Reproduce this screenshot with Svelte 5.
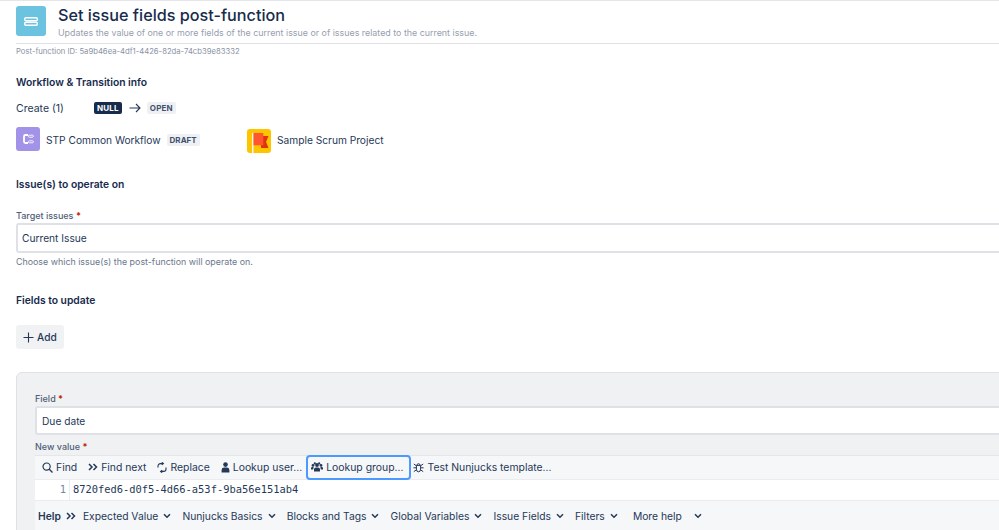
<script>
  const toolbarHelp = [
    { label: "Expected Value" },
    { label: "Nunjucks Basics" },
    { label: "Blocks and Tags" },
    { label: "Global Variables" },
    { label: "Issue Fields" },
    { label: "Filters" },
  ];
</script>

<div class="page">
  <header class="head">
    <div class="head-icon">
      <svg width="14" height="9" viewBox="0 0 14 9">
        <rect x="0.7" y="0.7" width="12.6" height="3" rx="1.2" fill="none" stroke="#fff" stroke-width="1.4" />
        <rect x="0.7" y="5.3" width="12.6" height="3" rx="1.2" fill="none" stroke="#fff" stroke-width="1.4" />
      </svg>
    </div>
    <div class="head-text">
      <h1>Set issue fields post-function</h1>
      <p>Updates the value of one or more fields of the current issue or of issues related to the current issue.</p>
    </div>
  </header>
  <div class="pf-id">Post-function ID: 5a9b46ea-4df1-4426-82da-74cb39e83332</div>

  <h2 class="first">Workflow &amp; Transition info</h2>
  <div class="transition">
    <span class="create">Create (1)</span>
    <span class="lozenge dark">NULL</span>
    <svg class="arrow" width="12" height="10" viewBox="0 0 12 10">
      <path d="M0.5 5H11M7 1l4 4-4 4" fill="none" stroke="#253858" stroke-width="1.1" />
    </svg>
    <span class="lozenge">OPEN</span>
  </div>

  <div class="context">
    <div class="workflow">
      <div class="ctx-icon purple">
        <svg width="11" height="10" viewBox="0 0 11 10">
          <path d="M5 1H2.4A1.4 1.4 0 0 0 1 2.4v5.2A1.4 1.4 0 0 0 2.4 9H5" fill="none" stroke="#fff" stroke-width="1.8" />
          <rect x="5.4" y="1.2" width="5" height="2" rx="1" fill="none" stroke="#fff" stroke-width="0.9" />
          <rect x="5.4" y="6.8" width="5" height="2" rx="1" fill="none" stroke="#fff" stroke-width="0.9" />
        </svg>
      </div>
      <span class="ctx-name">STP Common Workflow</span>
      <span class="lozenge draft">DRAFT</span>
    </div>
    <div class="project">
      <div class="ctx-icon yellow">
        <svg width="24" height="24" viewBox="0 0 24 24">
          <rect x="5" y="4" width="1.5" height="20" fill="#f4f5f7" />
          <path d="M14 7h7.5l-2.4 6 2.4 6H14z" fill="#de350b" />
          <path d="M6.5 4H16.3V16.3H6.5z" fill="#ff5630" />
        </svg>
      </div>
      <span class="ctx-name">Sample Scrum Project</span>
    </div>
  </div>

  <h2 class="issues">Issue(s) to operate on</h2>
  <label class="lbl target">Target issues <b>*</b></label>
  <div class="input">Current Issue</div>
  <div class="help">Choose which issue(s) the post-function will operate on.</div>

  <h2 class="fields">Fields to update</h2>
  <button class="add">
    <svg width="11" height="11" viewBox="0 0 11 11"><path d="M5.5 0.5v10M0.5 5.5h10" stroke="#253858" stroke-width="1.1" /></svg>
    Add
  </button>

  <section class="panel">
    <label class="lbl">Field <b>*</b></label>
    <div class="input small">Due date</div>
    <label class="lbl value">New value <b>*</b></label>
    <div class="editor">
      <div class="toolbar">
        <span class="tool">
          <svg width="11" height="11" viewBox="0 0 11 11"><circle cx="4.6" cy="4.6" r="3.6" fill="none" stroke="#253858" stroke-width="1.2" /><path d="M7.3 7.3l3.2 3.2" stroke="#253858" stroke-width="1.3" /></svg>
          Find
        </span>
        <span class="tool">
          <svg width="10" height="8" viewBox="0 0 10 8"><path d="M1 1l3 3-3 3M5.5 1l3 3-3 3" fill="none" stroke="#253858" stroke-width="1.5" /></svg>
          Find next
        </span>
        <span class="tool">
          <svg width="10" height="11" viewBox="0 0 10 11"><path d="M1 5.5V4a2.4 2.4 0 0 1 2.4-2.4H6M4.8 0.3 6.4 1.6 4.8 2.9M9 5.5V7a2.4 2.4 0 0 1-2.4 2.4H4M5.2 8.1 3.6 9.4l1.6 1.3" fill="none" stroke="#253858" stroke-width="1.1" /></svg>
          Replace
        </span>
        <span class="tool">
          <svg width="9" height="11" viewBox="0 0 9 11"><circle cx="4.5" cy="2.6" r="2.3" fill="#253858" /><path d="M0.6 10.5V8a2.6 2.6 0 0 1 2.6-2.4h2.6A2.6 2.6 0 0 1 8.4 8v2.5z" fill="#253858" /></svg>
          Lookup user...
        </span>
        <span class="tool focus">
          <svg width="12" height="10" viewBox="0 0 12 10"><circle cx="6" cy="3" r="1.9" fill="#253858" /><circle cx="2" cy="3.4" r="1.4" fill="#253858" /><circle cx="10" cy="3.4" r="1.4" fill="#253858" /><circle cx="3.8" cy="1.4" r="1.1" fill="#253858" /><circle cx="8.2" cy="1.4" r="1.1" fill="#253858" /><path d="M3 9.4V7a2 2 0 0 1 2-1.6h2A2 2 0 0 1 9 7v2.4z" fill="#253858" /><path d="M0 7.6V6.2A1.2 1.2 0 0 1 1.2 5H2.6L2.2 7.6zM12 7.6V6.2A1.2 1.2 0 0 0 10.8 5H9.4L9.8 7.6z" fill="#253858" /></svg>
          Lookup group...
        </span>
        <span class="tool">
          <svg width="11" height="11" viewBox="0 0 11 11"><path d="M3.4 3.4h4.2v3.8a2.1 2.6 0 0 1-4.2 0zM4 3.2a1.5 1.5 0 0 1 3 0M0.8 2l2.6 1.8M10.2 2 7.6 3.8M0.4 5.8h3M7.6 5.8h3M0.8 9.6l2.8-1.8M10.2 9.6 7.4 7.8" fill="none" stroke="#253858" stroke-width="1" /></svg>
          Test Nunjucks template...
        </span>
      </div>
      <div class="code">
        <span class="gutter">1</span>
        <span class="line">8720fed6-d0f5-4d66-a53f-9ba56e151ab4</span>
      </div>
      <div class="helpbar">
        <strong>Help</strong>
        <svg class="help-arrows" width="10" height="8" viewBox="0 0 10 8"><path d="M1 1l3 3-3 3M5.5 1l3 3-3 3" fill="none" stroke="#253858" stroke-width="1.5" /></svg>
        {#each toolbarHelp as item}
          <span class="menu">
            {item.label}
            <svg width="8" height="6" viewBox="0 0 8 6"><path d="M1 1.2l3 3 3-3" fill="none" stroke="#253858" stroke-width="1.5" /></svg>
          </span>
        {/each}
        <span class="menu more">
          More help
          <svg width="8" height="6" viewBox="0 0 8 6"><path d="M1 1.2l3 3 3-3" fill="none" stroke="#253858" stroke-width="1.5" /></svg>
        </span>
      </div>
    </div>
  </section>
</div>

<style>
  :global(body) {
    margin: 0;
    background: #fff;
    overflow: hidden;
  }
  .page {
    width: 1100px;
    height: 530px;
    overflow: hidden;
    box-sizing: border-box;
    padding-left: 16px;
    border-top: 1px solid #e4e6ea;
    font-family: Inter, "Liberation Sans", sans-serif;
    color: #253858;
    font-size: 10.2px;
  }
  .head {
    display: flex;
    gap: 12px;
    padding-top: 5px;
    height: 37px;
    border-bottom: 1px solid #dfe1e6;
  }
  .head-icon {
    width: 30px;
    height: 30px;
    background: #6cc3e0;
    border-radius: 3px;
    display: flex;
    align-items: center;
    justify-content: center;
  }
  .head-text h1 {
    margin: 0;
    font-size: 16.2px;
    line-height: 19px;
    font-weight: 500;
    color: #172b4d;
  }
  .head-text p {
    margin: 1px 0 0;
    font-size: 8.9px;
    line-height: 13px;
    color: #97a0af;
  }
  .pf-id {
    font-size: 7.7px;
    line-height: 10px;
    margin-top: 3px;
    color: #8993a4;
  }
  h2 {
    margin: 0;
    font-size: 10.3px;
    line-height: 14px;
    font-weight: 600;
    color: #172b4d;
  }
  h2.first {
    margin-top: 18px;
  }
  .transition {
    display: flex;
    align-items: center;
    margin-top: 12px;
    height: 14px;
    font-size: 10.5px;
  }
  .create {
    width: 78px;
  }
  .arrow {
    margin: 0 6px 0 7px;
  }
  .lozenge {
    background: #eff0f3;
    color: #42526e;
    font-size: 8px;
    font-weight: 700;
    line-height: 12px;
    padding: 0 3px;
    border-radius: 2px;
    letter-spacing: 0.2px;
  }
  .lozenge.dark {
    background: #172b4d;
    color: #fff;
  }
  .lozenge.draft {
    letter-spacing: 0;
  }
  .context {
    display: flex;
    margin-top: 12px;
    align-items: center;
    height: 26px;
  }
  .workflow,
  .project {
    display: flex;
    align-items: center;
  }
  .workflow {
    width: 231px;
  }
  .ctx-icon {
    width: 24px;
    height: 24px;
    border-radius: 3px;
    display: flex;
    align-items: center;
    justify-content: center;
    margin-right: 6px;
    overflow: hidden;
  }
  .purple {
    background: #a292e8;
    margin-bottom: 2px;
  }
  .yellow {
    background: #ffc400;
    margin-top: 2px;
  }
  .ctx-name {
    margin-right: 6px;
  }
  h2.issues {
    margin-top: 24px;
  }
  .lbl {
    display: block;
    font-size: 9px;
    line-height: 12px;
    font-weight: 500;
    color: #505f79;
  }
  .lbl b {
    color: #bf2600;
  }
  .lbl.target {
    margin-top: 19px;
  }
  .input {
    box-sizing: border-box;
    height: 30px;
    margin-top: 1px;
    padding: 0 4px;
    background: #fff;
    border: 2px solid #dfe1e6;
    border-radius: 3px;
    line-height: 26px;
  }
  .help {
    font-size: 8.9px;
    line-height: 12px;
    margin-top: 3px;
    color: #6b778c;
  }
  h2.fields {
    margin-top: 25px;
  }
  .add {
    display: flex;
    align-items: center;
    gap: 3px;
    height: 24px;
    width: 48px;
    margin-top: 18px;
    padding: 0 0 0 7px;
    border: 0;
    border-radius: 3px;
    background: #f1f2f4;
    font: 500 10.2px Inter, "Liberation Sans", sans-serif;
    color: #253858;
  }
  .panel {
    box-sizing: border-box;
    height: 200px;
    margin-top: 23px;
    padding: 20px 18px 0;
    background: #f0f1f3;
    border: 1px solid #dfe1e6;
    border-radius: 6px;
  }
  .input.small {
    height: 29px;
    margin-top: 1px;
    padding: 0 5px;
    line-height: 26px;
  }
  .lbl.value {
    margin-top: 6px;
  }
  .editor {
    margin-top: 2px;
    background: #fff;
    border-top: 1px solid #e4e6ea;
  }
  .toolbar {
    display: flex;
    align-items: center;
    height: 24px;
    padding-left: 7px;
    padding-bottom: 1px;
    background: #f6f7f9;
    border-bottom: 1px solid #ebecf0;
    box-sizing: border-box;
    font-size: 10.4px;
  }
  .tool {
    display: flex;
    align-items: center;
    gap: 3px;
    margin-right: 11px;
  }
  .tool.focus {
    box-sizing: border-box;
    height: 25px;
    padding: 0 6px 0 3px;
    margin: 0 2px 0 -7px;
    border: 2px solid #4c9aff;
    border-radius: 4px;
  }
  .code {
    display: flex;
    height: 20px;
    line-height: 19px;
    font-family: "DejaVu Sans Mono", monospace;
    font-size: 10.4px;
    border-bottom: 1px solid #ebecf0;
  }
  .gutter {
    width: 35px;
    box-sizing: border-box;
    padding-right: 3px;
    text-align: right;
    color: #7a869a;
    border-right: 1px solid #ebecf0;
  }
  .line {
    padding-left: 3px;
    color: #253858;
  }
  .helpbar {
    display: flex;
    align-items: center;
    height: 29px;
    padding-left: 3px;
    background: #f6f7f9;
    font-size: 10.3px;
  }
  .helpbar strong {
    font-weight: 600;
  }
  .help-arrows {
    margin: 0 7px 0 5px;
  }
  .menu {
    display: flex;
    align-items: center;
    gap: 5px;
    margin-right: 11.1px;
  }
  .more {
    gap: 12px;
    margin-left: 4px;
  }
</style>
